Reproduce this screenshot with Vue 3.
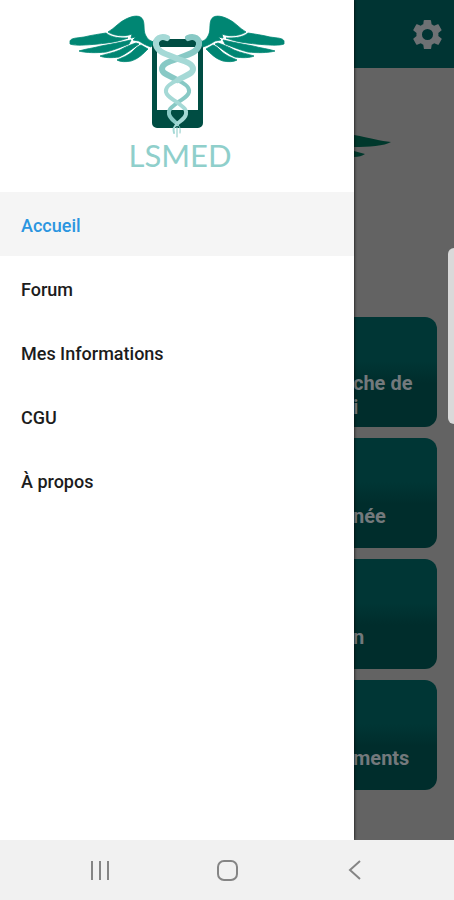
<template>
  <div class="screen">
    <div class="stage">
      <!-- Home page, dimmed behind the drawer -->
      <main class="home">
        <header class="app-bar">
          <button class="settings" type="button" aria-label="Paramètres">
            <svg viewBox="0 0 24 24" width="35" height="35" aria-hidden="true">
              <path
                fill="#6e7174"
                d="M19.4 13c.1-.3.1-.7.1-1s0-.7-.1-1l2.1-1.7c.2-.1.2-.4.1-.6l-2-3.5c-.1-.2-.4-.3-.6-.2l-2.5 1c-.5-.4-1.1-.7-1.7-1l-.4-2.6c0-.2-.2-.4-.5-.4h-4c-.2 0-.4.2-.5.4L9.1 5c-.6.2-1.2.6-1.7 1l-2.5-1c-.2-.1-.5 0-.6.2l-2 3.5c-.1.2-.1.5.1.6L4.500 11c0 .3-.1.700-.1 1s0 .700.1 1l-2.100 1.700c-.2.100-.2.400-.1.600l2 3.500c.1.200.4.300.6.200l2.500-1c.5.400 1.100.700 1.700 1l.4 2.600c0 .2.200.4.500.4h4c.2 0 .4-.2.500-.4l.4-2.600c.6-.2 1.200-.6 1.700-1l2.500 1c.2.100.5 0 .6-.2l2-3.500c.1-.2.100-.5-.1-.6L19.400 13zM12 15.800a3.800 3.800 0 1 1 0-7.600 3.800 3.800 0 0 1 0 7.600z"
              />
            </svg>
          </button>
        </header>

        <div class="banner">
          <svg viewBox="0 0 60 40" width="60" height="40" aria-hidden="true">
            <path fill="#00382c" d="M0 3 C16 6 27 9 37 10 C31 14 14 15 0 15 Z M0 19 L11 22 Q7 25 0 25 Z" />
          </svg>
        </div>

        <div class="cards">
          <button v-for="card in cards" :key="card" class="card" type="button">
            <span class="card-label">{{ card }}</span>
          </button>
        </div>
      </main>

      <div class="edge-handle"></div>

      <!-- Drawer -->
      <aside class="drawer">
        <div class="brand">
          <svg class="logo" viewBox="65 0 224 180" width="224" height="180" role="img" aria-label="LSMED">
            <path
              fill="#004d43"
              fill-rule="evenodd"
              d="M157 39h41a5 5 0 0 1 5 5v79a5 5 0 0 1-5 5h-41a5 5 0 0 1-5-5V44a5 5 0 0 1 5-5zM157 47v63h41V47z"
            />
            <g v-for="side in wings" :key="side" :transform="side" fill="#008673" stroke="#008673" stroke-width="0.8" stroke-linejoin="round">
              <path d="M108 32 C115 28 119 22 126 19 C134 15 141 15 143 20 C145 25 143 31 146 36 C148 40 151 41 154 42 L151 47 C145 45 142 43 139 41 L133 40 L136 37 L131 38 L132 34 C125 37 114 36 108 32 Z" />
              <path d="M70 41 C71 38 77 38 84 37 C92 35 100 34 106 33 C112 38 120 38 128 38 C118 42 107 43 98 44 C87 45 75 46 70 44 Z" />
              <path d="M79 51 C85 49 94 48 101 46 C112 44 122 42 131 40 L129 44 C121 47 114 50 106 52 C97 53 86 53 79 51 Z" />
              <path d="M100 56 C106 54 113 53 120 50 C125 47 130 45 136 43 L139 44 C132 49 126 54 119 57 C112 58 104 58 100 56 Z" />
              <path d="M117 60 C121 58 128 56 133 51 C136 48 138 46 141 45 L148 49 C143 54 138 59 131 61 C126 62 120 62 117 60 Z" />
            </g>
            <g fill="none" stroke-linecap="round" stroke-linejoin="round">
              <path
                stroke="#88c9c5"
                stroke-width="6"
                d="M188 38 C194 35 200 39 199 45 C197 53 188 54 177 59 C168 62 162 64 162 69 C162 74 171 76 177 80"
              />
              <path stroke="#88c9c5" stroke-width="4" d="M177 80 C184 83 190 87 189 92 C188 97 182 99 177 103 C172 107 168 109 169 114 C170 119 175 121 177 124" />
              <path stroke="#a5d9d6" stroke-width="2" d="M177 124 C173 127 173 130 174 133" />
              <path
                stroke="#a5d9d6"
                stroke-width="6"
                d="M167 38 C161 35 155 39 156 45 C158 53 168 54 178 59 C187 62 193 64 193 69 C193 74 184 76 178 80"
              />
              <path stroke="#a5d9d6" stroke-width="4" d="M178 80 C171 83 165 87 166 92 C167 97 173 99 178 103 C183 107 187 109 186 114 C185 119 180 121 177 124" />
              <path stroke="#88c9c5" stroke-width="1" d="M177 124 C181 127 180 130 180 133 M177 127 V137" />
            </g>
            <text class="logo-text" x="180" y="167" text-anchor="middle">LSMED</text>
          </svg>
        </div>

        <nav aria-label="Menu">
          <a
            v-for="item in items"
            :key="item"
            href="#"
            class="menu-item"
            :class="{ active: item === current }"
            @click.prevent="current = item"
          >
            {{ item }}
          </a>
        </nav>
      </aside>
    </div>

    <!-- Android navigation bar -->
    <footer class="system-bar">
      <button type="button" aria-label="Applications récentes">
        <svg viewBox="0 0 24 24" width="24" height="24" fill="none" stroke="#858585" stroke-width="2" aria-hidden="true">
          <path d="M4 3v19M12 3v19M20 3v19" />
        </svg>
      </button>
      <button type="button" aria-label="Écran d'accueil">
        <svg viewBox="0 0 24 24" width="24" height="24" fill="none" stroke="#858585" stroke-width="2" aria-hidden="true">
          <rect x="3" y="3" width="19" height="19" rx="6" />
        </svg>
      </button>
      <button type="button" aria-label="Retour">
        <svg viewBox="0 0 24 24" width="24" height="24" fill="none" stroke="#858585" stroke-width="2" aria-hidden="true">
          <path d="M18 3 8 12l10 9" />
        </svg>
      </button>
    </footer>
  </div>
</template>

<script setup>
import { ref } from 'vue'

const items = ['Accueil', 'Forum', 'Mes Informations', 'CGU', 'À propos']
const current = ref('Accueil')

const cards = ['che de\ni', 'née', 'n', 'ments']

// the right wing is the left one mirrored
const wings = ['translate(0 0)', 'translate(354 0) scale(-1 1)']
</script>

<style>
body {
  margin: 0;
}
</style>

<style scoped>
.screen {
  display: flex;
  flex-direction: column;
  min-height: 100vh;
  font-family: Roboto, 'Liberation Sans', sans-serif;
}

button {
  padding: 0;
  border: 0;
  background: none;
  font: inherit;
}

.stage {
  position: relative;
  flex: 1;
  overflow: hidden;
  background: #636363;
}

.app-bar {
  display: flex;
  align-items: center;
  justify-content: flex-end;
  height: 68px;
  padding-right: 9px;
  background: #003433;
}

.settings svg {
  display: block;
}

.banner {
  display: flex;
  height: 185px;
  padding: 64px 0 0 78%;
  box-sizing: border-box;
  margin-bottom: 64px;
}

.cards {
  display: grid;
  gap: 11px;
  padding: 0 17px 50px;
}

.card {
  display: flex;
  align-items: center;
  height: 110px;
  padding: 46px 0 0 80%;
  border-radius: 12px;
  background: linear-gradient(#003635 40%, #002d2c 60%);
  color: #73797c;
  text-align: left;
}

.card-label {
  font-size: 20px;
  font-weight: 700;
  line-height: 24px;
  white-space: pre;
}

.edge-handle {
  position: absolute;
  top: 248px;
  right: 0;
  width: 6px;
  height: 176px;
  border-radius: 6px 0 0 6px;
  background: #d9d9d9;
}

.drawer {
  position: absolute;
  top: 0;
  bottom: 0;
  left: 0;
  width: 78%;
  background: #fff;
  box-shadow: 0 0 3px #000;
}

.brand {
  display: flex;
  justify-content: center;
  height: 192px;
}

.logo-text {
  fill: #8fcfcb;
  font-family: Lato, sans-serif;
  font-size: 31px;
  font-weight: 400;
}

.menu-item {
  display: flex;
  align-items: center;
  box-sizing: border-box;
  height: 64px;
  padding: 3px 21px 0;
  color: #1c1c1c;
  font-size: 18px;
  font-weight: 500;
  line-height: 24px;
  text-decoration: none;
}

.menu-item.active {
  background: #f5f5f5;
  color: #2b95e0;
}

.system-bar {
  display: grid;
  grid-template-columns: repeat(3, 1fr);
  flex-shrink: 0;
  height: 60px;
  padding: 0 8%;
  background: #f1f1f1;
}

.system-bar button {
  display: flex;
  align-items: center;
  justify-content: center;
}
</style>
